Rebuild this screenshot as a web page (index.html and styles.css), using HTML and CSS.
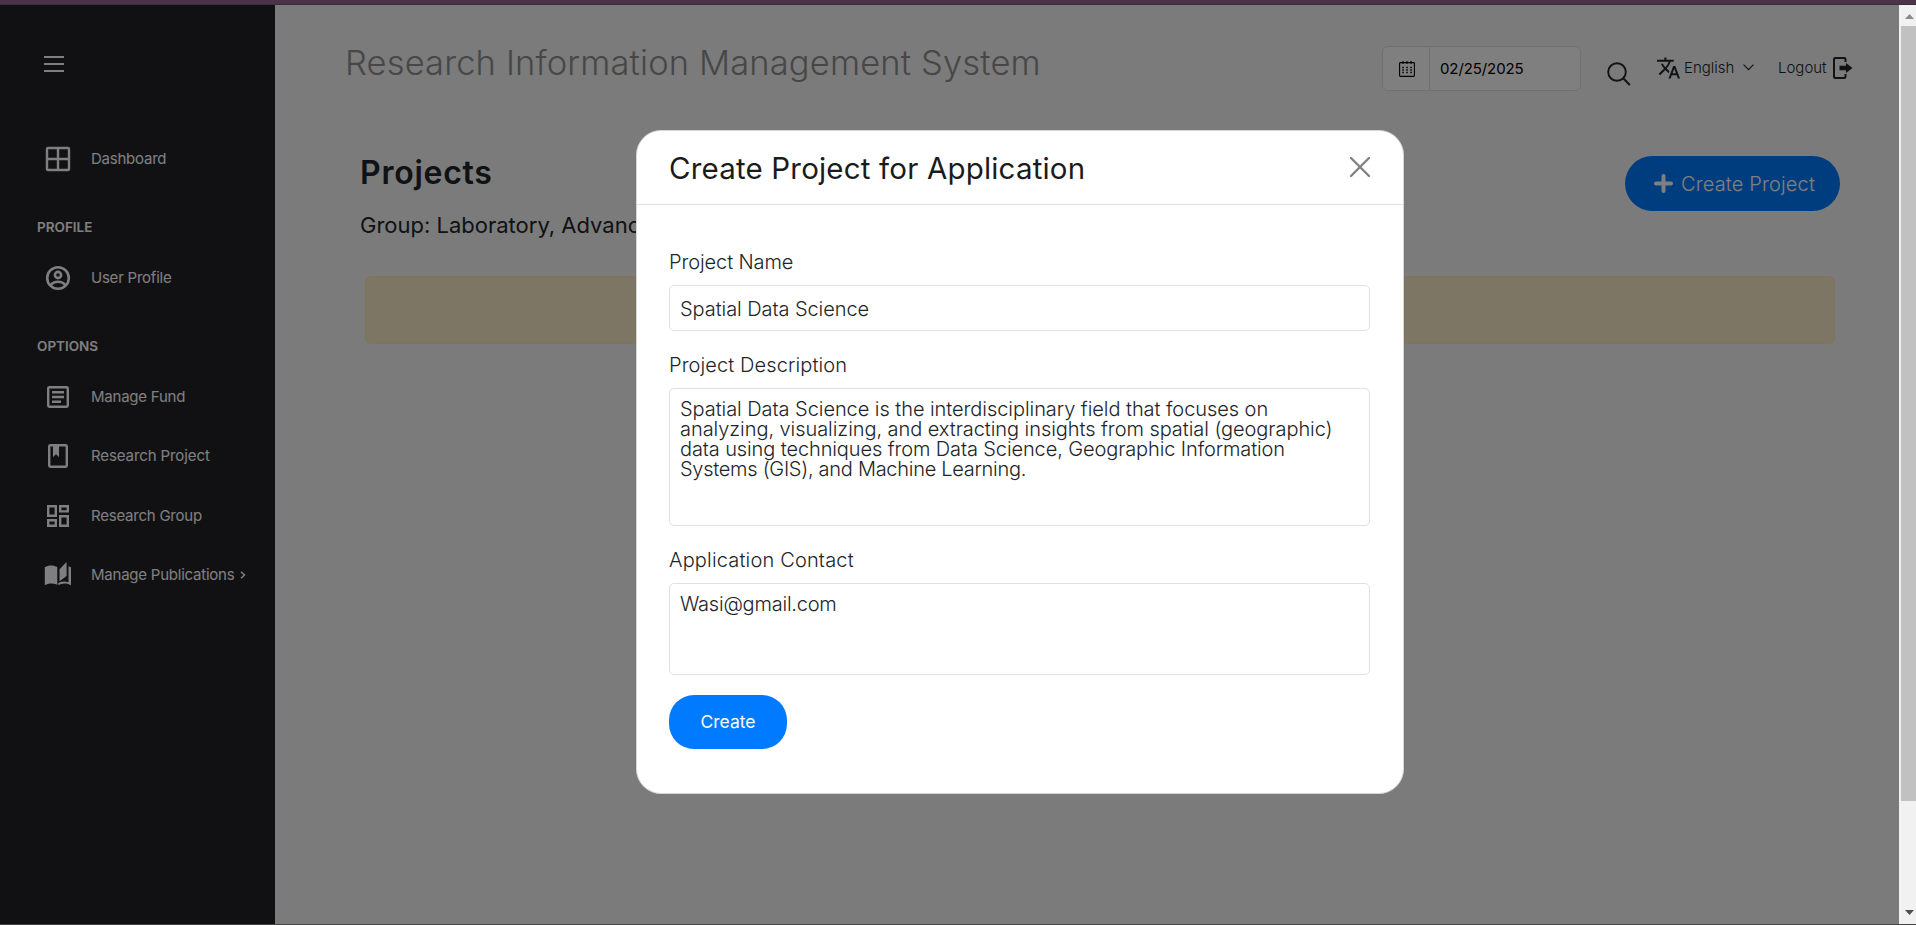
FILE: index.html
```html
<!DOCTYPE html>
<html lang="en">
<head>
<meta charset="utf-8">
<title>Research Information Management System</title>
<link rel="stylesheet" href="styles.css">
</head>
<body>
<div class="window">
  <div class="top-strip"></div>
  <div class="viewport">
    <div class="app">
      <aside class="sidebar">
        <svg class="menu-toggle" width="20" height="16" viewBox="0 0 20 16"><path d="M0 1h20M0 8h20M0 15h20" stroke="currentColor" stroke-width="2"/></svg>
        <nav class="nav">
          <a class="nav-item"><svg class="nav-icon" viewBox="0 0 28 28"><rect x="3" y="3" width="22" height="22" rx="1" fill="none" stroke="currentColor" stroke-width="2.4"/><path d="M14 3v22M3 14h22" stroke="currentColor" stroke-width="2.4"/></svg><span class="nav-text">Dashboard</span></a>
          <div class="nav-section">PROFILE</div>
          <a class="nav-item"><svg class="nav-icon" viewBox="0 0 28 28"><g fill="none" stroke="currentColor" stroke-width="2.6"><circle cx="14" cy="14" r="10.8"/><circle cx="14" cy="11" r="3.1"/><path d="M6.5 21.2c1.8-2.3 4.4-3.4 7.5-3.4s5.7 1.100 7.500 3.400"/></g></svg><span class="nav-text">User Profile</span></a>
          <div class="nav-section">OPTIONS</div>
          <a class="nav-item"><svg class="nav-icon" viewBox="0 0 28 28"><rect x="4.200" y="4.200" width="19.600" height="19.600" rx="1.200" fill="none" stroke="currentColor" stroke-width="2.400"/><path d="M8 9.200h12M8 14h12M8 18.800h9" stroke="currentColor" stroke-width="2.400"/></svg><span class="nav-text">Manage Fund</span></a>
          <a class="nav-item"><svg class="nav-icon" viewBox="0 0 28 28"><rect x="5.200" y="3.200" width="17.600" height="21.600" rx="1.200" fill="none" stroke="currentColor" stroke-width="2.400"/><path d="M9 3h6v12l-3-2.700-3 2.700z" fill="currentColor"/></svg><span class="nav-text nav-text-wide">Research Project</span></a>
          <a class="nav-item"><svg class="nav-icon" viewBox="0 0 28 28"><path fill="none" stroke="currentColor" stroke-width="2.400" d="M4.200 4.200h7.600v9.600H4.200zM16.200 4.200h7.600v5.200h-7.600zM4.200 18.200h7.600v5.600H4.200zM16.200 14.200h7.600v9.600h-7.600z"/></svg><span class="nav-text">Research Group</span></a>
          <a class="nav-item"><svg class="nav-icon" viewBox="0 0 28 28"><path fill="currentColor" d="M.8 6.200C4.500 3.900 9.500 3.900 13.300 6v17.800C9.500 22 4.500 22 .8 24.200zM15.500 8.300 22.600 1v14l-7.100 5.300zM24.500 5.300l2.500 1v18c-4-2.300-8.500-2.300-12.700-.2v-2.200c3.500-1.600 6.800-1.700 10.200-.7z"/></svg><span class="nav-text">Manage Publications</span><svg class="nav-arrow" width="6" height="8" viewBox="0 0 6 8"><path d="M1 .8 4.500 4 1 7.200" fill="none" stroke="currentColor" stroke-width="1.500"/></svg></a>
        </nav>
      </aside>
      <main class="main">
        <header class="header">
          <h1 class="brand">Research Information Management System</h1>
          <div class="date-box">
            <span class="date-icon"><svg width="16" height="16" viewBox="0 0 16 16"><rect x=".6" y="1.600" width="14.800" height="13.800" rx=".8" fill="none" stroke="currentColor" stroke-width="1.100"/><path d="M4 0v3M8 0v3M12 0v3" stroke="currentColor" stroke-width="1.100"/><path d="M3.300 6.500h10M3.300 9h10M3.300 11.500h10" stroke="currentColor" stroke-width="1.300" stroke-dasharray="1.500 2.500"/></svg></span>
            <span class="date-value">02/25/2025</span>
          </div>
          <svg class="search" width="24" height="24" viewBox="0 0 24 24"><circle cx="10" cy="10" r="8.800" fill="none" stroke="currentColor" stroke-width="1.900"/><path d="m16.200 16.200 6.600 6.800" stroke="currentColor" stroke-width="2"/></svg>
          <div class="lang">
            <svg width="23" height="22" viewBox="1 2 22 20"><path fill="currentColor" d="m12.870 15.070-2.540-2.510.03-.03A17.520 17.520 0 0 0 14.070 6H17V4h-7V2H8v2H1v2h11.170C11.500 7.920 10.440 9.750 9 11.350 8.070 10.320 7.300 9.190 6.690 8h-2c.73 1.630 1.730 3.170 2.980 4.560l-5.090 5.020L4 19l5-5 3.110 3.110zM18.500 10h-2L12 22h2l1.120-3h4.750L21 22h2zm-2.620 7 1.620-4.330L19.120 17z"/></svg>
            <span class="lang-name">English</span>
            <svg class="lang-arrow" width="11" height="7" viewBox="0 0 11 7"><path d="m.6.700 4.900 5 4.900-5" fill="none" stroke="currentColor" stroke-width="1.100"/></svg>
          </div>
          <div class="logout">
            <span class="logout-name">Logout</span>
            <svg width="20" height="22" viewBox="0 0 20 22"><path d="M12.500 5V2.200q0-1.200-1.200-1.200H2.200Q1 1 1 2.200v17.600Q1 21 2.200 21h9.100q1.200 0 1.200-1.200V17" fill="none" stroke="currentColor" stroke-width="2"/><path d="M6.500 8.800H13V6l6.500 5-6.500 5v-2.800H6.500z" fill="currentColor"/></svg>
          </div>
        </header>
        <section class="page-head">
          <div class="page-titles">
            <h2 class="page-title">Projects</h2>
            <p class="page-group">Group: Laboratory, Advanced</p>
          </div>
          <button class="create-project"><svg width="19" height="19" viewBox="0 0 19 19"><path d="M9.500 2v15M2 9.500h15" stroke="currentColor" stroke-width="4" stroke-linecap="round"/></svg><span>Create Project</span></button>
        </section>
        <div class="alert"></div>
      </main>
      <div class="backdrop">
        <div class="modal">
          <div class="modal-head">
            <h3 class="modal-title">Create Project for Application</h3>
            <svg class="close" width="20" height="20" viewBox="0 0 20 20"><path d="m1 1 18 18M19 1 1 19" stroke="currentColor" stroke-width="2.300" stroke-linecap="round"/></svg>
          </div>
          <form class="modal-body">
            <label class="label label-name">Project Name</label>
            <div class="field field-name">Spatial Data Science</div>
            <label class="label label-desc">Project Description</label>
            <div class="field field-desc"><span class="line line-a">Spatial Data Science is the interdisciplinary field that focuses on</span> <span class="line line-a">analyzing, visualizing, and extracting insights from spatial (geographic)</span> <span class="line line-b">data using techniques from Data Science, Geographic Information</span> <span class="line line-c">Systems (GIS), and Machine Learning.</span></div>
            <label class="label label-contact">Application Contact</label>
            <div class="field field-contact">Wasi@gmail.com</div>
            <button class="create" type="button">Create</button>
          </form>
        </div>
      </div>
    </div>
    <div class="scrollbar">
      <svg class="sb-arrow" width="9" height="5" viewBox="0 0 9 5"><path d="M4.500 0 9 5H0z" fill="#8b8b8b"/></svg>
      <div class="sb-thumb"></div>
      <svg class="sb-arrow" width="9" height="5" viewBox="0 0 9 5"><path d="M0 0h9L4.500 5z" fill="#505050"/></svg>
    </div>
  </div>
</div>
</body>
</html>
```
FILE: styles.css
```css
* { box-sizing: border-box; }
body { margin: 0; font-family: Inter, "Open Sans", sans-serif; overflow: hidden; }
h1, h2, h3, p { margin: 0; font-weight: 400; }
button { font-family: inherit; border: 0; }
svg { display: block; flex: none; }

.window { display: flex; flex-direction: column; width: 1916px; height: 925px; border-bottom: 1px solid #444; }
.top-strip { height: 5px; background: #4b3447; border-bottom: 1px solid #3b2f39; flex: none; }
.viewport { flex: 1; display: flex; min-height: 0; }
.app { position: relative; flex: 1; display: flex; background: #f6f6f6; color: #212529; min-width: 0; }

.sidebar { width: 275px; background: #222226; color: #fff; padding: 51px 0 0; }
.menu-toggle { margin-left: 44px; }
.nav { display: grid; grid-auto-rows: 59.5px; margin-top: 57px; }
.nav-item { display: flex; align-items: center; padding-left: 44px; font-size: 15px; }
.nav-icon { width: 28px; height: 28px; margin-right: 19px; }
.nav-text { letter-spacing: -0.23px; padding-bottom: 1px; white-space: nowrap; }
.nav-text-wide { letter-spacing: -0.1px; }
.nav-arrow { margin-left: 6px; }
.nav-section { padding: 18px 0 0 37px; display: flex; align-items: center; font-size: 13.5px; font-weight: 600; }

.main { flex: 1; min-width: 0; }
.header { display: flex; align-items: flex-start; padding-left: 70px; height: 151px; }
.brand { width: 1037px; padding-top: 36px; font-size: 34.5px; line-height: 44px; font-weight: 300; letter-spacing: 0.14px; color: #8e8e8e; white-space: nowrap; }
.date-box { margin-top: 41px; width: 199px; height: 45px; border: 1px solid #e2e2e2; border-radius: 6px; background: #fff; display: flex; color: #000; font-size: 15px; }
.date-icon { width: 47px; padding-left: 1px; border-right: 1px solid #e2e2e2; display: flex; align-items: center; justify-content: center; }
.date-value { padding-left: 10px; line-height: 43px; letter-spacing: -0.1px; }
.search { margin: 57px 0 0 26px; }
.lang, .logout { display: flex; align-items: center; margin-top: 51px; height: 23px; font-size: 15px; font-weight: 300; }
.lang { margin-left: 26px; width: 121px; }
.lang-name { margin-left: 4px; width: 50px; }
.lang-arrow { margin-left: 9px; }
.logout-name { width: 55px; }

.page-head { display: flex; align-items: flex-start; justify-content: space-between; padding: 0 59px 0 85px; height: 89px; }
.page-title { font-size: 32px; font-weight: 600; line-height: 33px; letter-spacing: 0.75px; }
.page-group { font-size: 22px; line-height: 30px; margin-top: 21px; white-space: nowrap; }
.create-project { display: flex; align-items: center; gap: 8px; width: 215px; height: 55px; padding: 0 0 0 29px; border-radius: 28px; background: #007bff; color: #fff; font-size: 20px; font-weight: 300; letter-spacing: 0.15px; white-space: nowrap; }
.alert { margin: 31px 64px 0 90px; height: 68px; border: 1px solid #ffe8b5; border-radius: 5px; background: #fdeccb; }

.backdrop { position: absolute; inset: 0; background: rgba(0, 0, 0, .5); display: flex; justify-content: center; align-items: flex-start; padding: 125px 0 0 141px; }
.modal { width: 768px; height: 664px; background: #fff; border: 1px solid #d5d5d8; border-radius: 25px; }
.modal-head { height: 74px; border-bottom: 1px solid #dee2e6; display: flex; align-items: center; justify-content: space-between; padding: 0 33px 0 32px; }
.modal-title { font-size: 29.5px; color: #1b1b1b; letter-spacing: 0.18px; }
.close { color: #808080; margin-bottom: 2px; }
.modal-body { padding: 45px 33px 0 32px; display: flex; flex-direction: column; }
.label { font-size: 20px; line-height: 24px; font-weight: 300; }
.label-name { letter-spacing: -0.1px; }
.label-desc { letter-spacing: 0.1px; }
.label-contact { letter-spacing: 0.17px; }
.field { margin: 11px 0 22px; border: 1px solid #dee2e6; border-radius: 5px; padding: 0 10px; font-size: 20px; line-height: 20px; font-weight: 300; color: #212529; }
.field-name { height: 46px; line-height: 46px; letter-spacing: -0.07px; }
.field-desc { height: 138px; padding-top: 10px; }
.line { display: block; white-space: nowrap; }
.line-a { letter-spacing: -0.06px; }
.line-b { letter-spacing: -0.11px; }
.line-c { letter-spacing: -0.28px; }
.field-contact { height: 92px; padding-top: 10px; margin-bottom: 20px; letter-spacing: -0.22px; }
.create { width: 118px; height: 54px; border-radius: 25px; background: #007bff; color: #fff; font-size: 17.5px; padding: 0 0 2px; }

.scrollbar { width: 17px; background: #f1f1f1; display: flex; flex-direction: column; padding: 9px 0 9px 2px; }
.sb-arrow { margin-left: 4px; }
.sb-thumb { height: 775px; background: #c1c1c1; margin: 7px 0 auto; }
```
